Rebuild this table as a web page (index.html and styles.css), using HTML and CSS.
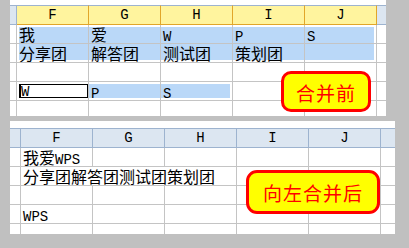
FILE: index.html
```html
<!DOCTYPE html>
<html lang="zh">
<head>
<meta charset="utf-8">
<title>合并前 / 向左合并后</title>
<link rel="stylesheet" href="styles.css">
</head>
<body>
<div class="page">
  <div class="sheet sheet-before">
    <div class="grid">
      <div class="cell hd corner"></div>
      <div class="cell hd hsel">F</div>
      <div class="cell hd hsel">G</div>
      <div class="cell hd hsel">H</div>
      <div class="cell hd hsel">I</div>
      <div class="cell hd hsel">J</div>
      <div class="cell hd rest"></div>

      <div class="cell rh"></div>
      <div class="cell sel e-tl">我</div>
      <div class="cell sel e-t">爱</div>
      <div class="cell sel e-t"><span class="en">W</span></div>
      <div class="cell sel e-t"><span class="en">P</span></div>
      <div class="cell sel e-tr"><span class="en">S</span></div>
      <div class="cell rest"></div>

      <div class="cell rh"></div>
      <div class="cell sel e-bl">分享团</div>
      <div class="cell sel e-b">解答团</div>
      <div class="cell sel e-b">测试团</div>
      <div class="cell sel e-b">策划团</div>
      <div class="cell sel e-br"></div>
      <div class="cell rest"></div>

      <div class="cell rh"></div>
      <div class="cell"></div>
      <div class="cell"></div>
      <div class="cell"></div>
      <div class="cell"></div>
      <div class="cell"></div>
      <div class="cell rest"></div>

      <div class="cell rh"></div>
      <div class="cell"><div class="active">W</div></div>
      <div class="cell sel e-tb"><span class="en">P</span></div>
      <div class="cell sel e-tbr"><span class="en">S</span></div>
      <div class="cell"></div>
      <div class="cell"></div>
      <div class="cell rest"></div>

      <div class="cell rh"></div>
      <div class="cell"></div>
      <div class="cell"></div>
      <div class="cell"></div>
      <div class="cell"></div>
      <div class="cell"></div>
      <div class="cell rest"></div>
    </div>
    <div class="callout callout-before">合并前</div>
  </div>

  <div class="sheet sheet-after">
    <div class="grid">
      <div class="cell hd corner"></div>
      <div class="cell hd">F</div>
      <div class="cell hd">G</div>
      <div class="cell hd">H</div>
      <div class="cell hd">I</div>
      <div class="cell hd">J</div>
      <div class="cell hd rest"></div>

      <div class="cell rh"></div>
      <div class="cell">我爱<span class="en">WPS</span></div>
      <div class="cell"></div>
      <div class="cell"></div>
      <div class="cell"></div>
      <div class="cell"></div>
      <div class="cell rest"></div>

      <div class="cell rh"></div>
      <div class="cell span3">分享团解答团测试团策划团</div>
      <div class="cell"></div>
      <div class="cell"></div>
      <div class="cell rest"></div>

      <div class="cell rh"></div>
      <div class="cell"></div>
      <div class="cell"></div>
      <div class="cell"></div>
      <div class="cell"></div>
      <div class="cell"></div>
      <div class="cell rest"></div>

      <div class="cell rh"></div>
      <div class="cell"><span class="en">WPS</span></div>
      <div class="cell"></div>
      <div class="cell"></div>
      <div class="cell"></div>
      <div class="cell"></div>
      <div class="cell rest"></div>

      <div class="cell rh"></div>
      <div class="cell"></div>
      <div class="cell"></div>
      <div class="cell"></div>
      <div class="cell"></div>
      <div class="cell"></div>
      <div class="cell rest"></div>
    </div>
    <div class="callout callout-after">向左合并后</div>
  </div>
</div>
</body>
</html>
```

FILE: styles.css
```css
html, body {
  margin: 0;
  padding: 0;
}
body {
  width: 409px;
  height: 248px;
  overflow: hidden;
  background: #c0c0c0;
  font-family: "Noto Sans CJK SC", "Liberation Sans", sans-serif;
}
.page {
  display: flex;
  flex-direction: column;
  gap: 5px;
  padding-left: 10px;
}
.sheet {
  position: relative;
  background: #fff;
  overflow: hidden;
  box-sizing: border-box;
}
.sheet-before {
  width: 376px;
  height: 116px;
  padding-top: 5px;
}
.sheet-after {
  width: 385px;
  height: 113px;
  padding-top: 7px;
}
.grid {
  display: grid;
  grid-template-rows: 20px repeat(5, 19px);
}
.sheet-before .grid {
  grid-template-columns: 7px repeat(5, 72px) 9px;
}
.sheet-after .grid {
  grid-template-columns: 11px repeat(5, 72px) 14px;
}
.cell {
  box-sizing: border-box;
  border-right: 1px solid #c4c4c4;
  border-bottom: 1px solid #c4c4c4;
  padding-left: 2px;
  font-size: 16px;
  line-height: 18px;
  color: #000;
  white-space: nowrap;
}
.cell.rest {
  border-right: none;
}
.span3 {
  grid-column: span 3;
}
.en {
  font-family: "Liberation Mono", monospace;
  font-size: 14px;
  line-height: 14px;
}
.cell.hd {
  border-top: 1px solid #9db3cf;
  border-right-color: #9db3cf;
  border-bottom-color: #9db3cf;
  background: #dce6f1;
  font-family: "Liberation Mono", monospace;
  font-size: 14px;
  text-align: center;
  padding-left: 0;
}
.cell.hd.rest {
  border-right: none;
}
.cell.hd.hsel {
  background: #fff49e;
  border-right-color: #e1a62a;
  border-bottom-color: #e1a62a;
}
.sel {
  background: #bad8f8;
}
.e-t { box-shadow: inset 0 2px #fff; }
.e-tl { box-shadow: inset 0 2px #fff, inset 2px 0 #fff; }
.e-tr { box-shadow: inset 0 2px #fff, inset -2px 0 #fff; }
.e-b { box-shadow: inset 0 -2px #fff; }
.e-bl { box-shadow: inset 0 -2px #fff, inset 2px 0 #fff; }
.e-br { box-shadow: inset 0 -2px #fff, inset -2px 0 #fff; }
.e-tb { box-shadow: inset 0 2px #fff, inset 0 -2px #fff; }
.e-tbr { box-shadow: inset 0 2px #fff, inset 0 -2px #fff, inset -2px 0 #fff; }

.active {
  box-sizing: border-box;
  height: 14px;
  margin-top: 2px;
  border: 1px solid #000;
  border-left-width: 2px;
  font-family: "Liberation Mono", monospace;
  font-size: 14px;
  line-height: 15px;
}

.callout {
  position: absolute;
  box-sizing: border-box;
  display: flex;
  align-items: center;
  justify-content: center;
  border: 3px solid #ff0000;
  border-radius: 10px;
  background: #ffff00;
  color: #ff0000;
  font-size: 19px;
  letter-spacing: 1px;
  white-space: nowrap;
}
.callout-before {
  left: 271px;
  top: 71px;
  width: 90px;
  height: 41px;
  padding-top: 2px;
}
.callout-after {
  left: 236px;
  top: 49px;
  width: 134px;
  height: 44px;
  border-radius: 11px;
}
```
